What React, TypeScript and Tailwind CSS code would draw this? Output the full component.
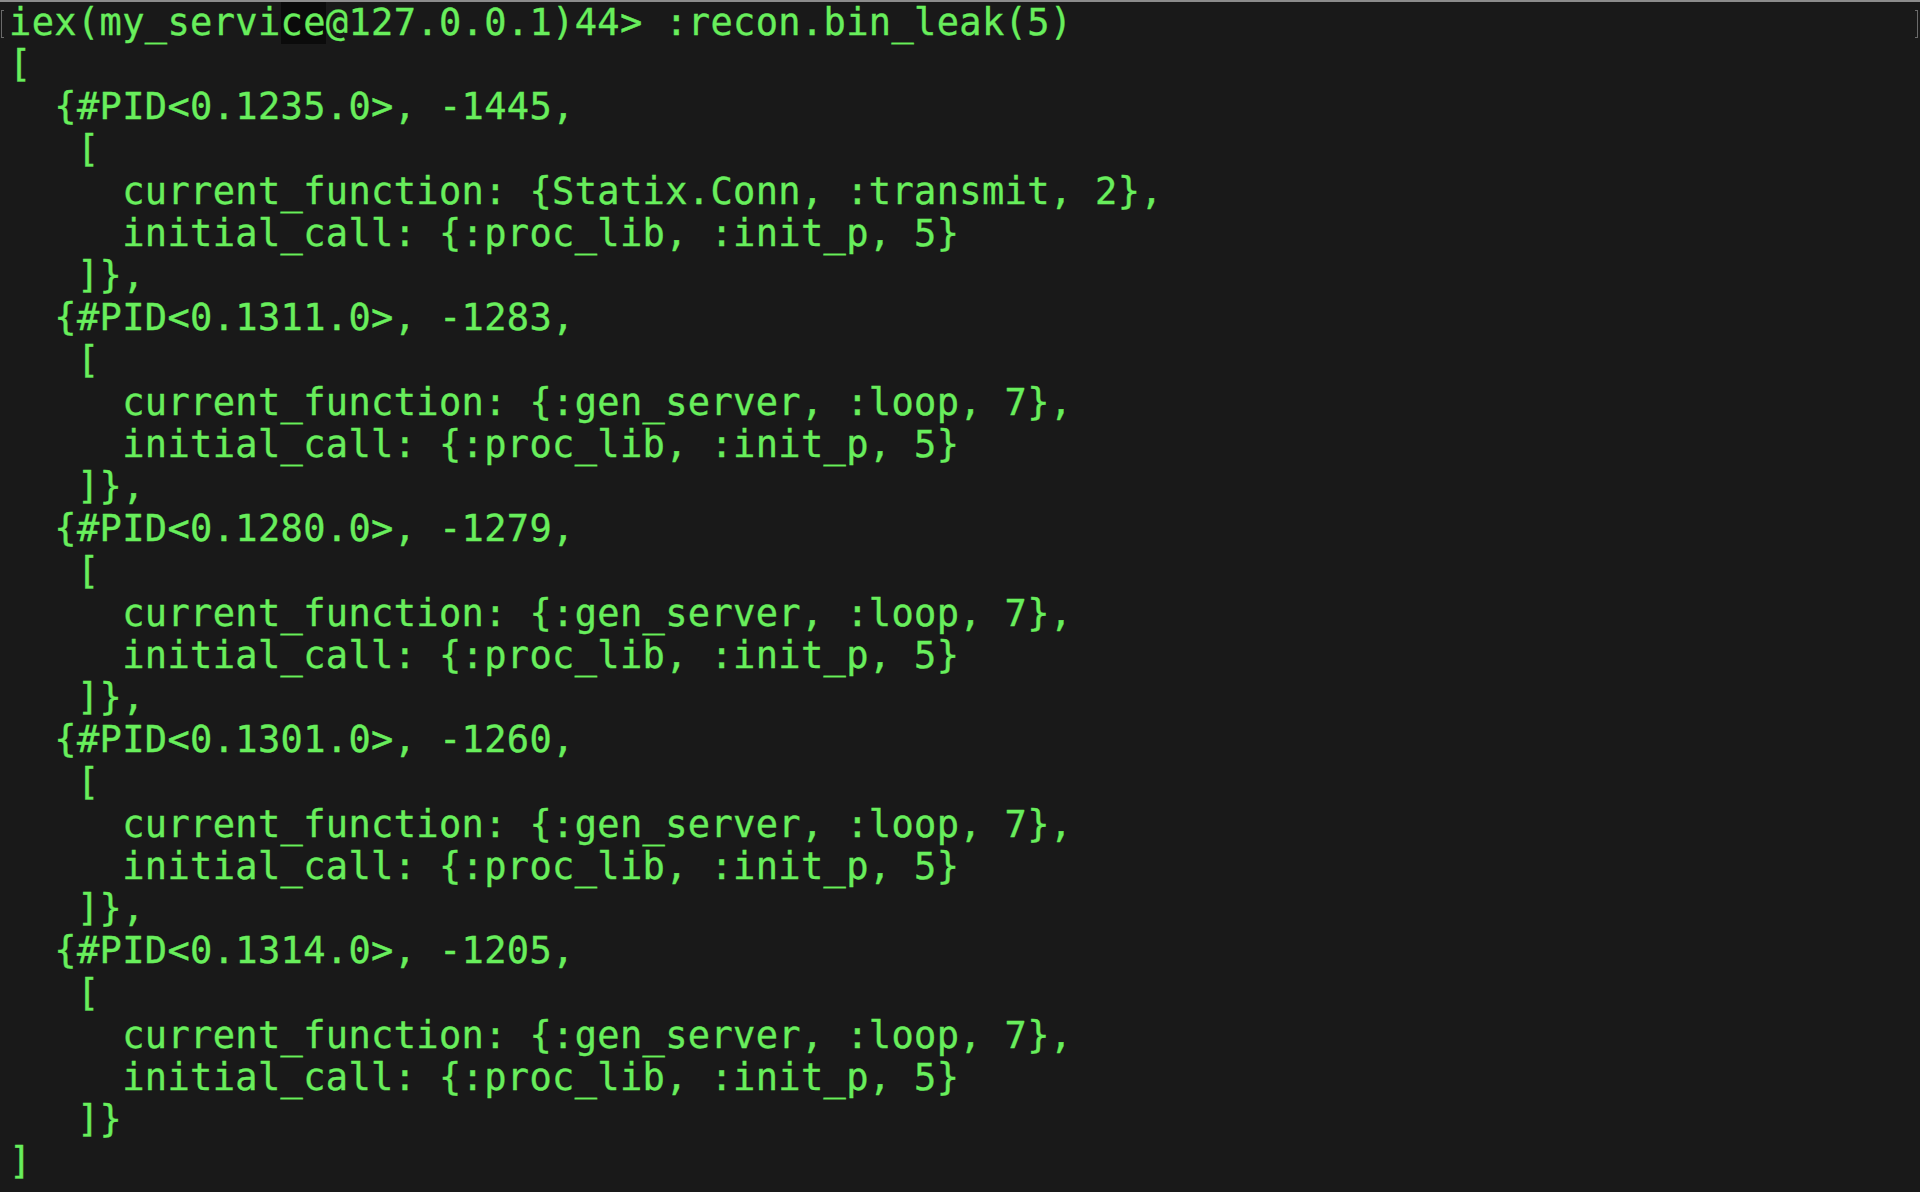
import React from "react";

const blocks = [
  { pid: "0.1235.0", n: "-1445", fn: "{Statix.Conn, :transmit, 2}" },
  { pid: "0.1311.0", n: "-1283", fn: "{:gen_server, :loop, 7}" },
  { pid: "0.1280.0", n: "-1279", fn: "{:gen_server, :loop, 7}" },
  { pid: "0.1301.0", n: "-1260", fn: "{:gen_server, :loop, 7}" },
  { pid: "0.1314.0", n: "-1205", fn: "{:gen_server, :loop, 7}" },
];

export default function App() {
  const lines: string[] = ["["];
  blocks.forEach((b, i) => {
    lines.push(`  {#PID<${b.pid}>, ${b.n},`);
    lines.push("   [");
    lines.push(`     current_function: ${b.fn},`);
    lines.push("     initial_call: {:proc_lib, :init_p, 5}");
    lines.push(i === blocks.length - 1 ? "   ]}" : "   ]},");
  });
  lines.push("]");

  return (
    <div className="w-[1920px] h-[1192px] bg-[#191919] border-t-2 border-[#8c8c8c] overflow-hidden relative">
      <div className="absolute left-[1px] top-[8px] w-[3px] h-[28px] border-l border-t border-b border-[#6a6a6a]" />
      <div className="absolute right-[2px] top-[8px] w-[3px] h-[28px] border-r border-t border-b border-[#6a6a6a]" />
      <div
        className="pl-[9px] pt-[0px] text-[37px] leading-[42.2px] tracking-[0.35px] text-[#68ee5c] whitespace-pre [-webkit-text-stroke:0.35px_#68ee5c]"
        style={{ fontFamily: '"DejaVu Sans Mono", monospace' }}
      >
        <div>
          <span>iex(my_servi</span>
          <span className="bg-[#0b0b0b]">ce</span>
          <span>@127.0.0.1)44&gt; :recon.bin_leak(5)</span>
        </div>
        {lines.map((l, i) => (
          <div key={i}>{l}</div>
        ))}
      </div>
    </div>
  );
}
